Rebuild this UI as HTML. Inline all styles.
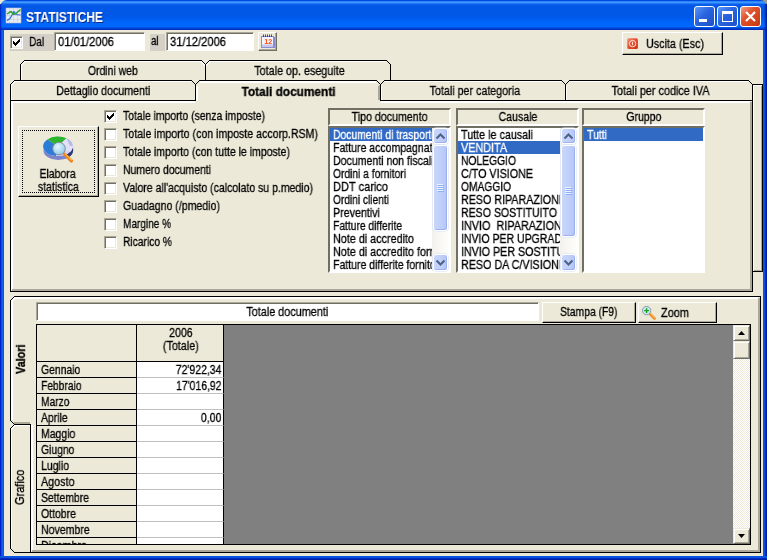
<!DOCTYPE html>
<html><head><meta charset="utf-8">
<title>STATISTICHE</title>
<style>
html,body{margin:0;padding:0;}
body{width:767px;height:560px;overflow:hidden;position:relative;background:#ece9d8;font-family:"Liberation Sans",sans-serif;font-size:12.5px;color:#000;}
.a{position:absolute;box-sizing:border-box;}
.t{position:absolute;white-space:pre;will-change:transform;-webkit-text-stroke:0.3px currentColor;}
svg{position:absolute;left:0;top:0;}
#title{left:0;top:0;width:767px;height:30px;border-radius:7px 7px 0 0;background:linear-gradient(180deg,#0047dd 0.5px,#2a86fb 1.5px,#3c97ff 2.5px,#2278f5 3.5px,#0a5eea 4.5px,#0257e6 6.5px,#0058e8 16.5px,#0066fb 22.5px,#0068ff 26.5px,#0055e4 27.5px,#003fd0 28.5px,#0030c0 29.5px);}
#bl{left:0;top:30px;width:4px;height:530px;background:linear-gradient(90deg,#0020c8 0.5px,#0a4fe0 1.5px,#1060ea 2.5px,#0a55e2 3.5px);}
#br{left:763px;top:30px;width:4px;height:530px;background:linear-gradient(90deg,#0a55e2 0.5px,#0a50dc 1.5px,#0030c0 2.5px,#001ea8 3.5px);}
#bb{left:0;top:556px;width:767px;height:4px;background:linear-gradient(180deg,#0a55e2 0.5px,#0a50dc 1.5px,#0030c0 2.5px,#001ea8 3.5px);}
.tb{top:6px;width:21px;height:21px;border:1px solid #fff;border-radius:3px;background:linear-gradient(135deg,#5a98f8 0%,#2a63e0 45%,#1e50c8 100%);}
.inp{background:#fff;border:1px solid;border-color:#aca899 #fff #fff #aca899;box-shadow:inset 1px 1px 0 #716f64;}
.btn{background:#ece9d8;border:1px solid;border-color:#fff #000 #000 #fff;box-shadow:inset -1px -1px 0 #aca899;}
.cb{width:13px;height:13px;background:#fff;border:1px solid;border-color:#aca899 #fff #fff #aca899;box-shadow:inset 1px 1px 0 #716f64,inset -1px -1px 0 #ece9d8;}
.hdr{border:2px solid;border-color:#716f64 #fff #fff #716f64;}
.list{background:#fff;border:2px solid;border-color:#716f64 #fff #fff #716f64;}
.sel{background:#316ac5;}
.g{background:#d4d0c8;}
</style></head><body>
<div class="a" style="left:760px;top:0;width:7px;height:7px;background:#9a988a"></div><div class="a" id="title"></div><div class="a" style="left:763px;top:4px;width:4px;height:26px;background:linear-gradient(90deg,rgba(0,30,160,0) 0.5px,rgba(0,30,160,.25) 1.5px,rgba(0,30,160,.6) 2.5px,rgba(0,25,150,.85) 3.5px)"></div><div class="a" style="left:0;top:4px;width:2px;height:26px;background:linear-gradient(90deg,rgba(0,30,190,.8) 0.5px,rgba(0,30,190,.2) 1.5px)"></div><div class="a" id="bl"></div><div class="a" id="br"></div><div class="a" id="bb"></div>
<div class="t" style="top:9px;font-size:14px;line-height:16px;height:16px;left:26px;transform-origin:0 0;transform:scaleX(0.8584);font-weight:bold;color:#fff;text-shadow:1px 1px 0 #0a2a8a;-webkit-text-stroke:0;">STATISTICHE</div>
<div class="a tb" style="left:694px"></div><div class="a tb" style="left:717px"></div><div class="a tb" style="left:740px;background:linear-gradient(135deg,#f0a088 0%,#e0502c 40%,#c8380f 100%)"></div>
<svg width="767" height="560" viewBox="0 0 767 560" shape-rendering="crispEdges"><rect x="699" y="19" width="8" height="3" fill="#fff"/><path d="M722.5,12.5 h10 v9 h-10 z" stroke="#fff" fill="none"/><rect x="722" y="11" width="11" height="3" fill="#fff"/></svg>
<svg width="767" height="560" viewBox="0 0 767 560"><path d="M746,12 l9,9 M755,12 l-9,9" stroke="#fff" stroke-width="2.2" fill="none"/></svg>
<svg width="767" height="560" viewBox="0 0 767 560"><rect x="6" y="8" width="15" height="15" fill="#e8ecf4" stroke="#b8bccc" stroke-width="0.6"/><path d="M9.5,8 v15 M13.5,8 v15 M17.5,8 v15 M6,11.5 h15 M6,15.5 h15 M6,19.5 h15" stroke="#c8ccd8" stroke-width="0.6"/><path d="M7,20.5 L10,18.5 L12,15 L14,11.5 L16,14.5 L20.5,15" stroke="#2c6ad8" stroke-width="1.1" fill="none"/><path d="M7,14 L11,11.5 L13.5,14.5 L16,13.5 L20.5,9.5" stroke="#22a022" stroke-width="1.4" fill="none"/></svg>
<div class="a g" style="left:10px;top:34px;width:44px;height:17px;"></div>
<div class="a cb" style="left:10px;top:36px;width:13px;height:13px;"></div>
<svg width="767" height="560" viewBox="0 0 767 560" shape-rendering="crispEdges" fill="#000"><rect x="13" y="41" width="1" height="3"/><rect x="14" y="42" width="1" height="3"/><rect x="15" y="43" width="1" height="3"/><rect x="16" y="42" width="1" height="3"/><rect x="17" y="41" width="1" height="3"/><rect x="18" y="40" width="1" height="3"/><rect x="19" y="39" width="1" height="3"/></svg>
<div class="t" style="top:36px;font-size:12.5px;line-height:13px;height:13px;left:28.8px;transform-origin:0 0;transform:scaleX(0.8100);">Dal</div>
<div class="a inp" style="left:54px;top:32px;width:91px;height:19px;"></div>
<div class="t" style="top:36px;font-size:12.5px;line-height:13px;height:13px;left:58px;transform-origin:0 0;transform:scaleX(0.8951);">01/01/2006</div>
<div class="a g" style="left:150px;top:34px;width:15px;height:17px;"></div>
<div class="t" style="top:35px;font-size:12.5px;line-height:13px;height:13px;left:150.7px;transform-origin:0 0;transform:scaleX(0.7807);">al</div>
<div class="a inp" style="left:166px;top:32px;width:88px;height:19px;"></div>
<div class="t" style="top:36px;font-size:12.5px;line-height:13px;height:13px;left:170px;transform-origin:0 0;transform:scaleX(0.8951);">31/12/2006</div>
<div class="a " style="left:258px;top:32px;width:19px;height:19px;background:#ece9d8;border:1px solid;border-color:#fff #716f64 #716f64 #fff;box-shadow:inset -1px -1px 0 #aca899;"></div>
<svg width="767" height="560" viewBox="0 0 767 560"><rect x="263" y="37" width="12" height="11" fill="#8888cc"/><rect x="261.5" y="36.5" width="12" height="11" fill="#f4f4fc" stroke="#8c8cd4"/><rect x="262" y="44.5" width="11" height="2.5" fill="#c4c8ec"/><path d="M263,36 h10" stroke="#404060" stroke-width="2" stroke-dasharray="1 1"/><path d="M263,34.8 h10" stroke="#70708c" stroke-width="1" stroke-dasharray="1 1"/><text x="264.2" y="43.6" font-family="Liberation Sans, sans-serif" font-size="7.2" font-weight="bold" fill="#ff4a10" textLength="8" lengthAdjust="spacingAndGlyphs">12</text></svg>
<div class="a btn" style="left:622px;top:32px;width:101px;height:23px;"></div>
<div class="t" style="top:38px;font-size:12.5px;line-height:13px;height:13px;left:645.5px;transform-origin:0 0;transform:scaleX(0.8609);">Uscita (Esc)</div>
<svg width="767" height="560" viewBox="0 0 767 560"><defs><linearGradient id="ug" x1="0" y1="0" x2="1" y2="1"><stop offset="0" stop-color="#f48a70"/><stop offset="0.5" stop-color="#e44a2a"/><stop offset="1" stop-color="#d03010"/></linearGradient></defs><rect x="627.3" y="38.3" width="10.6" height="10.6" rx="1.5" fill="url(#ug)"/><circle cx="632.6" cy="43.6" r="3.2" fill="none" stroke="#fbe4dc" stroke-width="1"/><path d="M632.6,41.8 v3.4" stroke="#fbe4dc" stroke-width="1.1"/></svg>
<div class="a cb" style="left:104px;top:110px;width:13px;height:13px;"></div>
<svg width="767" height="560" viewBox="0 0 767 560" shape-rendering="crispEdges" fill="#000"><rect x="107" y="115" width="1" height="3"/><rect x="108" y="116" width="1" height="3"/><rect x="109" y="117" width="1" height="3"/><rect x="110" y="116" width="1" height="3"/><rect x="111" y="115" width="1" height="3"/><rect x="112" y="114" width="1" height="3"/><rect x="113" y="113" width="1" height="3"/></svg>
<div class="t" style="top:110px;font-size:12.5px;line-height:13px;height:13px;left:123px;transform-origin:0 0;transform:scaleX(0.8309);">Totale importo (senza imposte)</div>
<div class="a cb" style="left:104px;top:128px;width:13px;height:13px;"></div>
<div class="t" style="top:128px;font-size:12.5px;line-height:13px;height:13px;left:123px;transform-origin:0 0;transform:scaleX(0.8480);">Totale importo (con imposte accorp.RSM)</div>
<div class="a cb" style="left:104px;top:146px;width:13px;height:13px;"></div>
<div class="t" style="top:146px;font-size:12.5px;line-height:13px;height:13px;left:123px;transform-origin:0 0;transform:scaleX(0.8404);">Totale importo (con tutte le imposte)</div>
<div class="a cb" style="left:104px;top:164px;width:13px;height:13px;"></div>
<div class="t" style="top:164px;font-size:12.5px;line-height:13px;height:13px;left:123px;transform-origin:0 0;transform:scaleX(0.8333);">Numero documenti</div>
<div class="a cb" style="left:104px;top:182px;width:13px;height:13px;"></div>
<div class="t" style="top:182px;font-size:12.5px;line-height:13px;height:13px;left:123px;transform-origin:0 0;transform:scaleX(0.8411);">Valore all'acquisto (calcolato su p.medio)</div>
<div class="a cb" style="left:104px;top:200px;width:13px;height:13px;"></div>
<div class="t" style="top:200px;font-size:12.5px;line-height:13px;height:13px;left:123px;transform-origin:0 0;transform:scaleX(0.8460);">Guadagno (/pmedio)</div>
<div class="a cb" style="left:104px;top:218px;width:13px;height:13px;"></div>
<div class="t" style="top:218px;font-size:12.5px;line-height:13px;height:13px;left:123px;transform-origin:0 0;transform:scaleX(0.8033);">Margine %</div>
<div class="a cb" style="left:104px;top:236px;width:13px;height:13px;"></div>
<div class="t" style="top:236px;font-size:12.5px;line-height:13px;height:13px;left:123px;transform-origin:0 0;transform:scaleX(0.8201);">Ricarico %</div>
<div class="a btn" style="left:18px;top:126px;width:81px;height:71px;"></div>
<div class="a " style="left:22px;top:130px;width:73px;height:63px;border:1px dotted #000;"></div>
<svg width="767" height="560" viewBox="0 0 767 560"><defs><radialGradient id="lg" cx="0.4" cy="0.35" r="0.7"><stop offset="0" stop-color="#e4f6fc"/><stop offset="1" stop-color="#8cc8ec"/></radialGradient><linearGradient id="hg" x1="0" y1="0" x2="1" y2="0"><stop offset="0" stop-color="#f8c830"/><stop offset="1" stop-color="#e85a10"/></linearGradient></defs><ellipse cx="58.3" cy="150.5" rx="14.8" ry="9.6" fill="#7c84cc"/><path d="M66,158.5 A14.8,9.6 0 0 0 73.1,150.5 v-3 l-7,6 z" fill="#30387c"/><ellipse cx="58" cy="146.3" rx="14.8" ry="9.8" fill="#d4d4f0"/><path d="M58,146.3 L47.5,139.4 A14.8,9.8 0 0 0 56,156 z" fill="#2a7cd8"/><path d="M58,146.3 L47.5,139.4 A14.8,9.8 0 0 1 66.5,138.3 z" fill="#2cb42c"/><path d="M58,146.3 L66.5,138.3 A14.8,9.8 0 0 1 70,152 z" fill="#e0e0f6"/><path d="M66.5,138.3 A14.8,9.8 0 0 1 72.8,146 L70,146 z" fill="#b8b8e4"/><path d="M64.5,154.2 L71.5,161" stroke="#f08020" stroke-width="3.2" stroke-linecap="round"/><path d="M65,153.6 L71.8,160.2" stroke="#f8c040" stroke-width="1.2"/><circle cx="59" cy="148.6" r="6.3" fill="url(#lg)" stroke="#8c8c94" stroke-width="1"/></svg>
<div class="t" style="top:168px;font-size:12.5px;line-height:13px;height:13px;left:36.45px;transform-origin:50% 0;transform:scaleX(0.8354);">Elabora</div>
<div class="t" style="top:181px;font-size:12.5px;line-height:13px;height:13px;left:34.18px;transform-origin:50% 0;transform:scaleX(0.8429);">statistica</div>
<div class="a hdr" style="left:328px;top:108px;width:123px;height:18px;"></div>
<div class="t" style="top:111px;font-size:12.5px;line-height:13px;height:13px;left:344.91px;transform-origin:50% 0;transform:scaleX(0.8521);">Tipo documento</div>
<div class="a list" style="left:328px;top:126px;width:123px;height:147px;"></div>
<div class="a sel" style="left:330px;top:128px;width:102px;height:13px;"></div>
<div class="a" style="left:330px;top:128px;width:102px;height:13px;clip-path:inset(0 0 -3px 0);">
<div class="t" style="top:1px;font-size:12.5px;line-height:13px;height:13px;left:2.5px;transform-origin:0 0;transform:scaleX(0.8269);color:#fff;">Documenti di trasporto</div>
</div>
<div class="a" style="left:330px;top:141px;width:102px;height:13px;clip-path:inset(0 0 -3px 0);">
<div class="t" style="top:1px;font-size:12.5px;line-height:13px;height:13px;left:2.5px;transform-origin:0 0;transform:scaleX(0.8419);">Fatture accompagnatorie</div>
</div>
<div class="a" style="left:330px;top:154px;width:102px;height:13px;clip-path:inset(0 0 -3px 0);">
<div class="t" style="top:1px;font-size:12.5px;line-height:13px;height:13px;left:2.5px;transform-origin:0 0;transform:scaleX(0.8459);">Documenti non fiscali</div>
</div>
<div class="a" style="left:330px;top:167px;width:102px;height:13px;clip-path:inset(0 0 -3px 0);">
<div class="t" style="top:1px;font-size:12.5px;line-height:13px;height:13px;left:2.5px;transform-origin:0 0;transform:scaleX(0.8208);">Ordini a fornitori</div>
</div>
<div class="a" style="left:330px;top:180px;width:102px;height:13px;clip-path:inset(0 0 -3px 0);">
<div class="t" style="top:1px;font-size:12.5px;line-height:13px;height:13px;left:2.5px;transform-origin:0 0;transform:scaleX(0.8831);">DDT carico</div>
</div>
<div class="a" style="left:330px;top:193px;width:102px;height:13px;clip-path:inset(0 0 -3px 0);">
<div class="t" style="top:1px;font-size:12.5px;line-height:13px;height:13px;left:2.5px;transform-origin:0 0;transform:scaleX(0.8142);">Ordini clienti</div>
</div>
<div class="a" style="left:330px;top:206px;width:102px;height:13px;clip-path:inset(0 0 -3px 0);">
<div class="t" style="top:1px;font-size:12.5px;line-height:13px;height:13px;left:2.5px;transform-origin:0 0;transform:scaleX(0.8562);">Preventivi</div>
</div>
<div class="a" style="left:330px;top:219px;width:102px;height:13px;clip-path:inset(0 0 -3px 0);">
<div class="t" style="top:1px;font-size:12.5px;line-height:13px;height:13px;left:2.5px;transform-origin:0 0;transform:scaleX(0.8230);">Fatture differite</div>
</div>
<div class="a" style="left:330px;top:232px;width:102px;height:13px;clip-path:inset(0 0 -3px 0);">
<div class="t" style="top:1px;font-size:12.5px;line-height:13px;height:13px;left:2.5px;transform-origin:0 0;transform:scaleX(0.8634);">Note di accredito</div>
</div>
<div class="a" style="left:330px;top:245px;width:102px;height:13px;clip-path:inset(0 0 -3px 0);">
<div class="t" style="top:1px;font-size:12.5px;line-height:13px;height:13px;left:2.5px;transform-origin:0 0;transform:scaleX(0.8636);">Note di accredito fornitori</div>
</div>
<div class="a" style="left:330px;top:258px;width:102px;height:13px;clip-path:inset(0 0 -3px 0);">
<div class="t" style="top:1px;font-size:12.5px;line-height:13px;height:13px;left:2.5px;transform-origin:0 0;transform:scaleX(0.8411);">Fatture differite fornitori</div>
</div>
<div class="a " style="left:432px;top:128px;width:17px;height:143px;background:linear-gradient(90deg,#f3f1ec,#fefefb);"></div>
<div class="a " style="left:433px;top:128px;width:15px;height:16px;background:linear-gradient(90deg,#c8d6fb 0%,#c1d0fa 50%,#b4c5f5 100%);border:1px solid #fff;border-radius:3px;box-shadow:inset -1px -1px 0 #9cb0ee, 0 0 0 0.5px #d6e0fb;"></div>
<div class="a " style="left:433px;top:254px;width:15px;height:17px;background:linear-gradient(90deg,#c8d6fb 0%,#c1d0fa 50%,#b4c5f5 100%);border:1px solid #fff;border-radius:3px;box-shadow:inset -1px -1px 0 #9cb0ee, 0 0 0 0.5px #d6e0fb;"></div>
<div class="a " style="left:433px;top:145px;width:15px;height:86px;background:linear-gradient(90deg,#c8d6fb 0%,#c1d0fa 50%,#b4c5f5 100%);border:1px solid #fff;border-radius:3px;box-shadow:inset -1px -1px 0 #9cb0ee, 0 0 0 0.5px #d6e0fb;"></div>
<svg width="767" height="560" viewBox="0 0 767 560"><path d="M437,184.5 h6" stroke="#eef4fe"/><path d="M438,185.5 h6" stroke="#8cb0f8"/><path d="M437,186.5 h6" stroke="#eef4fe"/><path d="M438,187.5 h6" stroke="#8cb0f8"/><path d="M437,188.5 h6" stroke="#eef4fe"/><path d="M438,189.5 h6" stroke="#8cb0f8"/><path d="M437,190.5 h6" stroke="#eef4fe"/><path d="M438,191.5 h6" stroke="#8cb0f8"/><path d="M436.5,138.5 l4,-4 l4,4 M436.5,260.5 l4,4 l4,-4" stroke="#4d6185" stroke-width="2" fill="none"/></svg>
<div class="a hdr" style="left:456px;top:108px;width:123px;height:18px;"></div>
<div class="t" style="top:111px;font-size:12.5px;line-height:13px;height:13px;left:494.56px;transform-origin:50% 0;transform:scaleX(0.8400);">Causale</div>
<div class="a list" style="left:456px;top:126px;width:123px;height:147px;"></div>
<div class="a" style="left:458px;top:128px;width:102px;height:13px;clip-path:inset(0 0 -3px 0);">
<div class="t" style="top:1px;font-size:12.5px;line-height:13px;height:13px;left:2.5px;transform-origin:0 0;transform:scaleX(0.8611);">Tutte le causali</div>
</div>
<div class="a sel" style="left:458px;top:141px;width:102px;height:13px;"></div>
<div class="a" style="left:458px;top:141px;width:102px;height:13px;clip-path:inset(0 0 -3px 0);">
<div class="t" style="top:1px;font-size:12.5px;line-height:13px;height:13px;left:2.5px;transform-origin:0 0;transform:scaleX(0.8638);color:#fff;">VENDITA</div>
</div>
<div class="a" style="left:458px;top:154px;width:102px;height:13px;clip-path:inset(0 0 -3px 0);">
<div class="t" style="top:1px;font-size:12.5px;line-height:13px;height:13px;left:2.5px;transform-origin:0 0;transform:scaleX(0.8247);">NOLEGGIO</div>
</div>
<div class="a" style="left:458px;top:167px;width:102px;height:13px;clip-path:inset(0 0 -3px 0);">
<div class="t" style="top:1px;font-size:12.5px;line-height:13px;height:13px;left:2.5px;transform-origin:0 0;transform:scaleX(0.8589);">C/TO VISIONE</div>
</div>
<div class="a" style="left:458px;top:180px;width:102px;height:13px;clip-path:inset(0 0 -3px 0);">
<div class="t" style="top:1px;font-size:12.5px;line-height:13px;height:13px;left:2.5px;transform-origin:0 0;transform:scaleX(0.8180);">OMAGGIO</div>
</div>
<div class="a" style="left:458px;top:193px;width:102px;height:13px;clip-path:inset(0 0 -3px 0);">
<div class="t" style="top:1px;font-size:12.5px;line-height:13px;height:13px;left:2.5px;transform-origin:0 0;transform:scaleX(0.8556);">RESO RIPARAZIONE</div>
</div>
<div class="a" style="left:458px;top:206px;width:102px;height:13px;clip-path:inset(0 0 -3px 0);">
<div class="t" style="top:1px;font-size:12.5px;line-height:13px;height:13px;left:2.5px;transform-origin:0 0;transform:scaleX(0.8445);">RESO SOSTITUITO</div>
</div>
<div class="a" style="left:458px;top:219px;width:102px;height:13px;clip-path:inset(0 0 -3px 0);">
<div class="t" style="top:1px;font-size:12.5px;line-height:13px;height:13px;left:2.5px;transform-origin:0 0;transform:scaleX(0.8654);">INVIO  RIPARAZIONE</div>
</div>
<div class="a" style="left:458px;top:232px;width:102px;height:13px;clip-path:inset(0 0 -3px 0);">
<div class="t" style="top:1px;font-size:12.5px;line-height:13px;height:13px;left:2.5px;transform-origin:0 0;transform:scaleX(0.8405);">INVIO PER UPGRADE</div>
</div>
<div class="a" style="left:458px;top:245px;width:102px;height:13px;clip-path:inset(0 0 -3px 0);">
<div class="t" style="top:1px;font-size:12.5px;line-height:13px;height:13px;left:2.5px;transform-origin:0 0;transform:scaleX(0.8551);">INVIO PER SOSTITUZIONE</div>
</div>
<div class="a" style="left:458px;top:258px;width:102px;height:13px;clip-path:inset(0 0 -3px 0);">
<div class="t" style="top:1px;font-size:12.5px;line-height:13px;height:13px;left:2.5px;transform-origin:0 0;transform:scaleX(0.8588);">RESO DA C/VISIONE</div>
</div>
<div class="a " style="left:560px;top:128px;width:17px;height:143px;background:linear-gradient(90deg,#f3f1ec,#fefefb);"></div>
<div class="a " style="left:561px;top:128px;width:15px;height:16px;background:linear-gradient(90deg,#c8d6fb 0%,#c1d0fa 50%,#b4c5f5 100%);border:1px solid #fff;border-radius:3px;box-shadow:inset -1px -1px 0 #9cb0ee, 0 0 0 0.5px #d6e0fb;"></div>
<div class="a " style="left:561px;top:254px;width:15px;height:17px;background:linear-gradient(90deg,#c8d6fb 0%,#c1d0fa 50%,#b4c5f5 100%);border:1px solid #fff;border-radius:3px;box-shadow:inset -1px -1px 0 #9cb0ee, 0 0 0 0.5px #d6e0fb;"></div>
<div class="a " style="left:561px;top:145px;width:15px;height:92px;background:linear-gradient(90deg,#c8d6fb 0%,#c1d0fa 50%,#b4c5f5 100%);border:1px solid #fff;border-radius:3px;box-shadow:inset -1px -1px 0 #9cb0ee, 0 0 0 0.5px #d6e0fb;"></div>
<svg width="767" height="560" viewBox="0 0 767 560"><path d="M565,187.5 h6" stroke="#eef4fe"/><path d="M566,188.5 h6" stroke="#8cb0f8"/><path d="M565,189.5 h6" stroke="#eef4fe"/><path d="M566,190.5 h6" stroke="#8cb0f8"/><path d="M565,191.5 h6" stroke="#eef4fe"/><path d="M566,192.5 h6" stroke="#8cb0f8"/><path d="M565,193.5 h6" stroke="#eef4fe"/><path d="M566,194.5 h6" stroke="#8cb0f8"/><path d="M564.5,138.5 l4,-4 l4,4 M564.5,260.5 l4,4 l4,-4" stroke="#4d6185" stroke-width="2" fill="none"/></svg>
<div class="a hdr" style="left:582px;top:108px;width:123px;height:18px;"></div>
<div class="t" style="top:111px;font-size:12.5px;line-height:13px;height:13px;left:622.65px;transform-origin:50% 0;transform:scaleX(0.8400);">Gruppo</div>
<div class="a list" style="left:582px;top:126px;width:123px;height:147px;"></div>
<div class="a sel" style="left:584px;top:128px;width:119px;height:13px;"></div>
<div class="a" style="left:584px;top:128px;width:119px;height:13px;clip-path:inset(0 0 -3px 0);">
<div class="t" style="top:1px;font-size:12.5px;line-height:13px;height:13px;left:2.5px;transform-origin:0 0;transform:scaleX(0.8400);color:#fff;">Tutti</div>
</div>
<svg width="767" height="560" viewBox="0 0 767 560" shape-rendering="crispEdges"><path d="M752,84.5 H762.5 V271.5 H752" stroke="#000" stroke-width="1" fill="none"/><path d="M753.5,271 V85.5 H762" stroke="#fff" stroke-width="1" fill="none"/><path d="M761.5,86 V271 M754,270.5 H762" stroke="#aca899" stroke-width="1" fill="none"/><path d="M21.5,80 V65 L25,61.5 H201 L205.5,66 L210,61.5 H386" stroke="#fff" stroke-width="1" fill="none"/><path d="M20.5,80 V64.5 L24.5,60.5 H201.5 L205.5,64.5 L209.5,60.5 H386.5 L390.5,64.5 V80.5 M205.5,64.5 V80" stroke="#000" stroke-width="1" fill="none"/><path d="M11.5,100 V85 L15,81.5 H191 M200,81.5 H376 M385,81.5 H561 M570,81.5 H748" stroke="#fff" stroke-width="1" fill="none"/><path d="M196.5,86 V100 M381.5,86 V100 M566.5,86 V100" stroke="#fff" stroke-width="1" fill="none"/><path d="M200,82.5 H376 M197.5,86 V101" stroke="#fff" stroke-width="1" fill="none"/><path d="M378.5,86 V100 M379.5,85 V100" stroke="#aca899" stroke-width="1" fill="none"/><path d="M10.5,291 V84.5 L14.5,80.5 H191.5 L195.5,84.5 L199.5,80.5 H376.5 L380.5,84.5 L384.5,80.5 H561.5 L565.5,84.5 L569.5,80.5 H748.5 L752.5,84.5 V291.5 H10" stroke="#000" stroke-width="1" fill="none"/><path d="M195.5,84.5 V100.5 H10.5 M380.5,84.5 V100.5 H752 M565.5,84.5 V100" stroke="#000" stroke-width="1" fill="none"/><path d="M12,290 V102 H195 M381,102 H750" stroke="#fff" stroke-width="2" fill="none"/><path d="M751,102 V290 M12,290 H752" stroke="#aca899" stroke-width="2" fill="none"/><path d="M10.5,420 V300.5 L14.5,296.5 H760.5 V552.5 H14.5 L10.5,548.5 V428.5 L14.5,424.5 H30.5 V552 M10.5,420.5 L14.5,424.5" stroke="#000" stroke-width="1" fill="none"/><path d="M12,420 V301 L15,298 H758" stroke="#fff" stroke-width="2" fill="none"/><path d="M32,425 V551" stroke="#fff" stroke-width="2" fill="none"/><path d="M11.5,548 V429 L15,425.5 H30" stroke="#fff" stroke-width="1" fill="none"/><path d="M759,298 V551 M32,551 H760" stroke="#aca899" stroke-width="2" fill="none"/><path d="M14,423 H30" stroke="#aca899" stroke-width="2" fill="none"/></svg>
<div class="t" style="top:65px;font-size:12.5px;line-height:13px;height:13px;left:83.12px;transform-origin:50% 0;transform:scaleX(0.8368);">Ordini web</div>
<div class="t" style="top:65px;font-size:12.5px;line-height:13px;height:13px;left:247.22px;transform-origin:50% 0;transform:scaleX(0.8623);">Totale op. eseguite</div>
<div class="t" style="top:85px;font-size:12.5px;line-height:13px;height:13px;left:47.76px;transform-origin:50% 0;transform:scaleX(0.8508);">Dettaglio documenti</div>
<div class="t" style="top:86px;font-size:12.5px;line-height:13px;height:13px;left:239.46px;transform-origin:50% 0;transform:scaleX(0.9487);font-weight:bold;">Totali documenti</div>
<div class="t" style="top:85px;font-size:12.5px;line-height:13px;height:13px;left:422.19px;transform-origin:50% 0;transform:scaleX(0.8568);">Totali per categoria</div>
<div class="t" style="top:85px;font-size:12.5px;line-height:13px;height:13px;left:604.48px;transform-origin:50% 0;transform:scaleX(0.8670);">Totali per codice IVA</div>
<div class="t" style="left:15.4px;top:374.3px;font-size:12.5px;line-height:13px;height:13px;transform-origin:0 0;transform:rotate(-90deg) scaleX(0.8665);font-weight:bold;">Valori</div>
<div class="t" style="left:14.4px;top:505.3px;font-size:12.5px;line-height:13px;height:13px;transform-origin:0 0;transform:rotate(-90deg) scaleX(0.8785);">Grafico</div>
<div class="a inp" style="left:36px;top:302px;width:503px;height:19px;"></div>
<div class="t" style="top:306px;font-size:12.5px;line-height:13px;height:13px;left:239.74px;transform-origin:50% 0;transform:scaleX(0.8676);">Totale documenti</div>
<div class="a btn" style="left:542px;top:302px;width:94px;height:21px;"></div>
<div class="t" style="top:306px;font-size:12.5px;line-height:13px;height:13px;left:554.07px;transform-origin:50% 0;transform:scaleX(0.8277);">Stampa (F9)</div>
<div class="a btn" style="left:638px;top:302px;width:79px;height:21px;"></div>
<div class="t" style="top:307px;font-size:12.5px;line-height:13px;height:13px;left:660.5px;transform-origin:0 0;transform:scaleX(0.8763);">Zoom</div>
<svg width="767" height="560" viewBox="0 0 767 560"><path d="M650,314 L654.5,318.5" stroke="#f08828" stroke-width="2.6" stroke-linecap="round"/><path d="M650.2,313.6 L654.8,318" stroke="#f8c858" stroke-width="0.9"/><circle cx="646.6" cy="310.6" r="4.2" fill="#c4e8f8" stroke="#8c98a8" stroke-width="1"/><path d="M644.2,310.6 h4.8 M646.6,308.2 v4.8" stroke="#18a018" stroke-width="1.4"/></svg>
<div class="a " style="left:36px;top:324px;width:715px;height:221px;background:#808080;border:1px solid #000;"></div>
<div class="a " style="left:37px;top:325px;width:100px;height:37px;background:#ece9d8;border-right:1px solid #000;border-bottom:1px solid #000;"></div>
<div class="a " style="left:137px;top:325px;width:87px;height:37px;background:#ece9d8;border-right:1px solid #000;border-bottom:1px solid #000;"></div>
<div class="t" style="top:327px;font-size:12.5px;line-height:13px;height:13px;left:166.59px;transform-origin:50% 0;transform:scaleX(0.8485);">2006</div>
<div class="t" style="top:340px;font-size:12.5px;line-height:13px;height:13px;left:159.76px;transform-origin:50% 0;transform:scaleX(0.8636);">(Totale)</div>
<div class="a" style="left:37px;top:362px;width:187px;height:182px;overflow:hidden;">
<div class="a " style="left:0px;top:0px;width:100px;height:16px;background:#ece9d8;border-right:1px solid #000;border-bottom:1px solid #000;"></div>
<div class="a " style="left:100px;top:0px;width:87px;height:16px;background:#fff;border-right:1px solid #000;border-bottom:1px solid #c0c0c0;"></div>
<div class="a " style="left:0px;top:16px;width:100px;height:16px;background:#ece9d8;border-right:1px solid #000;border-bottom:1px solid #000;"></div>
<div class="a " style="left:100px;top:16px;width:87px;height:16px;background:#fff;border-right:1px solid #000;border-bottom:1px solid #c0c0c0;"></div>
<div class="a " style="left:0px;top:32px;width:100px;height:16px;background:#ece9d8;border-right:1px solid #000;border-bottom:1px solid #000;"></div>
<div class="a " style="left:100px;top:32px;width:87px;height:16px;background:#fff;border-right:1px solid #000;border-bottom:1px solid #c0c0c0;"></div>
<div class="a " style="left:0px;top:48px;width:100px;height:16px;background:#ece9d8;border-right:1px solid #000;border-bottom:1px solid #000;"></div>
<div class="a " style="left:100px;top:48px;width:87px;height:16px;background:#fff;border-right:1px solid #000;border-bottom:1px solid #c0c0c0;"></div>
<div class="a " style="left:0px;top:64px;width:100px;height:16px;background:#ece9d8;border-right:1px solid #000;border-bottom:1px solid #000;"></div>
<div class="a " style="left:100px;top:64px;width:87px;height:16px;background:#fff;border-right:1px solid #000;border-bottom:1px solid #c0c0c0;"></div>
<div class="a " style="left:0px;top:80px;width:100px;height:16px;background:#ece9d8;border-right:1px solid #000;border-bottom:1px solid #000;"></div>
<div class="a " style="left:100px;top:80px;width:87px;height:16px;background:#fff;border-right:1px solid #000;border-bottom:1px solid #c0c0c0;"></div>
<div class="a " style="left:0px;top:96px;width:100px;height:16px;background:#ece9d8;border-right:1px solid #000;border-bottom:1px solid #000;"></div>
<div class="a " style="left:100px;top:96px;width:87px;height:16px;background:#fff;border-right:1px solid #000;border-bottom:1px solid #c0c0c0;"></div>
<div class="a " style="left:0px;top:112px;width:100px;height:16px;background:#ece9d8;border-right:1px solid #000;border-bottom:1px solid #000;"></div>
<div class="a " style="left:100px;top:112px;width:87px;height:16px;background:#fff;border-right:1px solid #000;border-bottom:1px solid #c0c0c0;"></div>
<div class="a " style="left:0px;top:128px;width:100px;height:16px;background:#ece9d8;border-right:1px solid #000;border-bottom:1px solid #000;"></div>
<div class="a " style="left:100px;top:128px;width:87px;height:16px;background:#fff;border-right:1px solid #000;border-bottom:1px solid #c0c0c0;"></div>
<div class="a " style="left:0px;top:144px;width:100px;height:16px;background:#ece9d8;border-right:1px solid #000;border-bottom:1px solid #000;"></div>
<div class="a " style="left:100px;top:144px;width:87px;height:16px;background:#fff;border-right:1px solid #000;border-bottom:1px solid #c0c0c0;"></div>
<div class="a " style="left:0px;top:160px;width:100px;height:16px;background:#ece9d8;border-right:1px solid #000;border-bottom:1px solid #000;"></div>
<div class="a " style="left:100px;top:160px;width:87px;height:16px;background:#fff;border-right:1px solid #000;border-bottom:1px solid #c0c0c0;"></div>
<div class="a " style="left:0px;top:176px;width:100px;height:16px;background:#ece9d8;border-right:1px solid #000;border-bottom:1px solid #000;"></div>
<div class="a " style="left:100px;top:176px;width:87px;height:16px;background:#fff;border-right:1px solid #000;border-bottom:1px solid #c0c0c0;"></div>
<div class="t" style="top:2px;font-size:12.5px;line-height:13px;height:13px;left:3.6px;transform-origin:0 0;transform:scaleX(0.8315);">Gennaio</div>
<div class="t" style="top:2px;font-size:12.5px;line-height:13px;height:13px;left:129.67px;transform-origin:100% 0;transform:scaleX(0.8399);">72'922,34</div>
<div class="t" style="top:18px;font-size:12.5px;line-height:13px;height:13px;left:3.6px;transform-origin:0 0;transform:scaleX(0.8208);">Febbraio</div>
<div class="t" style="top:18px;font-size:12.5px;line-height:13px;height:13px;left:129.67px;transform-origin:100% 0;transform:scaleX(0.8344);">17'016,92</div>
<div class="t" style="top:34px;font-size:12.5px;line-height:13px;height:13px;left:3.6px;transform-origin:0 0;transform:scaleX(0.8176);">Marzo</div>
<div class="t" style="top:50px;font-size:12.5px;line-height:13px;height:13px;left:3.6px;transform-origin:0 0;transform:scaleX(0.8321);">Aprile</div>
<div class="t" style="top:50px;font-size:12.5px;line-height:13px;height:13px;left:159.86px;transform-origin:100% 0;transform:scaleX(0.8421);">0,00</div>
<div class="t" style="top:66px;font-size:12.5px;line-height:13px;height:13px;left:3.6px;transform-origin:0 0;transform:scaleX(0.8366);">Maggio</div>
<div class="t" style="top:82px;font-size:12.5px;line-height:13px;height:13px;left:3.6px;transform-origin:0 0;transform:scaleX(0.8285);">Giugno</div>
<div class="t" style="top:98px;font-size:12.5px;line-height:13px;height:13px;left:3.6px;transform-origin:0 0;transform:scaleX(0.8390);">Luglio</div>
<div class="t" style="top:114px;font-size:12.5px;line-height:13px;height:13px;left:3.6px;transform-origin:0 0;transform:scaleX(0.8607);">Agosto</div>
<div class="t" style="top:130px;font-size:12.5px;line-height:13px;height:13px;left:3.6px;transform-origin:0 0;transform:scaleX(0.8323);">Settembre</div>
<div class="t" style="top:146px;font-size:12.5px;line-height:13px;height:13px;left:3.6px;transform-origin:0 0;transform:scaleX(0.8396);">Ottobre</div>
<div class="t" style="top:162px;font-size:12.5px;line-height:13px;height:13px;left:3.6px;transform-origin:0 0;transform:scaleX(0.8444);">Novembre</div>
<div class="t" style="top:178px;font-size:12.5px;line-height:13px;height:13px;left:3.6px;transform-origin:0 0;transform:scaleX(0.8598);">Dicembre</div>
</div>
<div class="a " style="left:733px;top:325px;width:17px;height:219px;background:repeating-conic-gradient(#fff 0 25%,#ece9d8 0 50%) 0 0/2px 2px;"></div>
<div class="a " style="left:733px;top:325px;width:17px;height:16px;background:#ece9d8;border:1px solid;border-color:#ece9d8 #716f64 #716f64 #ece9d8;box-shadow:inset 1px 1px 0 #fff,inset -1px -1px 0 #aca899;"></div>
<div class="a " style="left:733px;top:341px;width:17px;height:18px;background:#ece9d8;border:1px solid;border-color:#ece9d8 #716f64 #716f64 #ece9d8;box-shadow:inset 1px 1px 0 #fff,inset -1px -1px 0 #aca899;"></div>
<div class="a " style="left:733px;top:528px;width:17px;height:16px;background:#ece9d8;border:1px solid;border-color:#ece9d8 #716f64 #716f64 #ece9d8;box-shadow:inset 1px 1px 0 #fff,inset -1px -1px 0 #aca899;"></div>
<svg width="767" height="560" viewBox="0 0 767 560"><path d="M738,335 h7 l-3.5,-4 z M738,534 h7 l-3.5,4 z" fill="#000"/></svg>
</body></html>
